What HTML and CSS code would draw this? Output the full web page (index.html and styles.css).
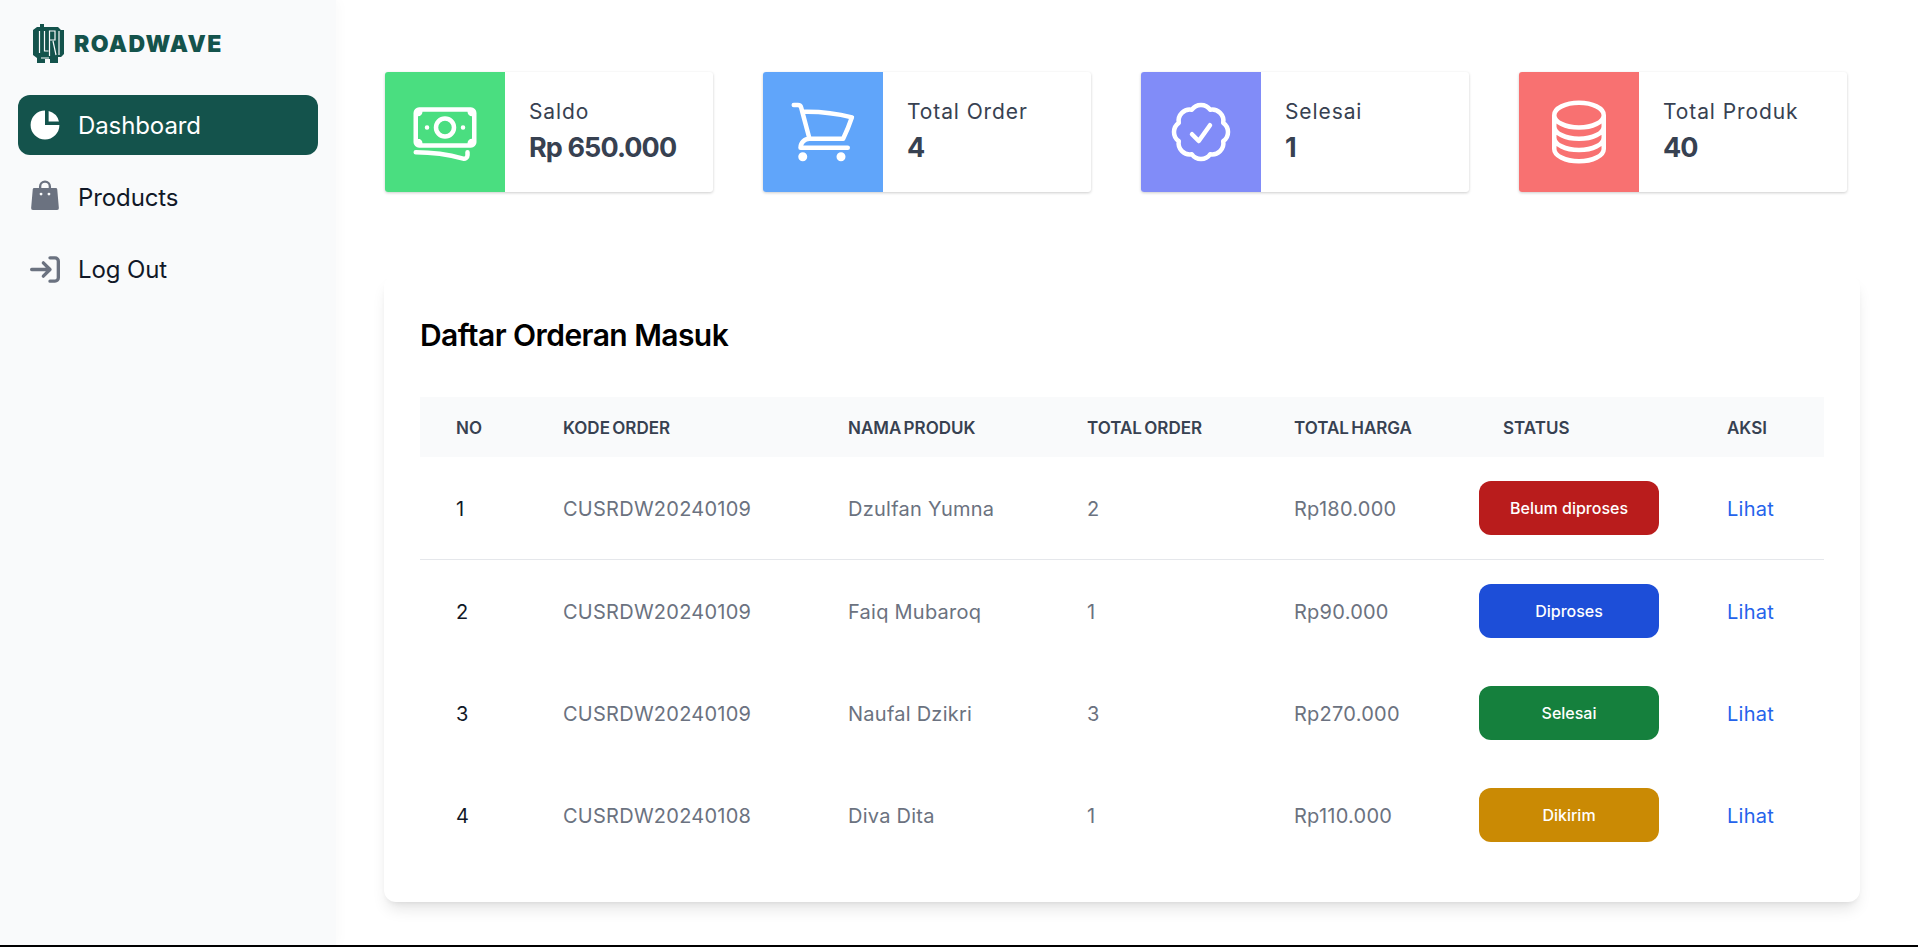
FILE: index.html
```html
<!DOCTYPE html>
<html lang="en">
<head>
    <meta charset="UTF-8">
    <meta name="viewport" content="width=device-width, initial-scale=1.0">
    <title>Roadwave Dashboard</title>
    <link rel="stylesheet" href="styles.css">
</head>
<body>

<div class="app">
    <aside class="sidebar">
        <div class="brand">
            <svg class="brand-logo" viewBox="0 0 32 42">
                <path fill="#14534c" d="M7 1h4v3h14l3 3h3v24l-3 3h-3v6h-8v-4h-5v4H4v-5l-4-3V7l4-3h3z"/>
                <path fill="none" stroke="#f9fafb" stroke-width="1.2" d="M6.5 8v22M11.5 8v20h4M16.5 8h5.5v9h-5.5zM16.5 17v16M20 18l3 14M26 8v24M8 35h8"/>
            </svg>
            <span class="brand-name">ROADWAVE</span>
        </div>
        <nav class="nav">
            <a class="nav-item active" href="#">
                <span class="nav-icon">
                    <svg width="36" height="36" viewBox="0 0 20 20" fill="currentColor"><path d="M2 10a8 8 0 018-8v8h8a8 8 0 11-16 0z"/><path d="M12 2.252A8.014 8.014 0 0117.748 8H12V2.252z"/></svg>
                </span>
                Dashboard
            </a>
            <a class="nav-item" href="#">
                <span class="nav-icon">
                    <svg width="36" height="36" viewBox="0 0 20 20" fill="currentColor"><path fill-rule="evenodd" d="M4 5h12a.8.8 0 01.8.7l.9 10.4a1 1 0 01-1 1.1H3.3a1 1 0 01-1-1.1l.9-10.4A.8.8 0 014 5zM7 8.4a.8.8 0 101.6 0 .8.8 0 10-1.6 0zM11.4 8.4a.8.8 0 101.6 0 .8.8 0 10-1.6 0z"/><path fill="none" stroke="currentColor" stroke-width="1.3" d="M7.3 6V4.2a2.7 2.7 0 015.4 0V6"/></svg>
                </span>
                Products
            </a>
            <a class="nav-item" href="#">
                <span class="nav-icon">
                    <svg width="30" height="27" viewBox="0 0 18 16" fill="none" stroke="currentColor" stroke-width="2" stroke-linecap="round" stroke-linejoin="round"><path d="M1 8h11m0 0L8 4m4 4-4 4m4-11h3a2 2 0 0 1 2 2v10a2 2 0 0 1-2 2h-3"/></svg>
                </span>
                Log Out
            </a>
        </nav>
    </aside>

    <main class="main">
        <section class="stats">
            <div class="stat">
                <div class="stat-icon green">
                    <svg class="hero" viewBox="0 0 24 24"><path d="M2.25 18.75a60.07 60.07 0 0115.797 2.101c.727.198 1.453-.342 1.453-1.096V18.75M3.75 4.5v.75A.75.75 0 013 6h-.75m0 0v-.375c0-.621.504-1.125 1.125-1.125H20.25M2.25 6v9m18-10.5v.75c0 .414.336.75.75.75h.75m-1.5-1.5h.375c.621 0 1.125.504 1.125 1.125v9.75c0 .621-.504 1.125-1.125 1.125h-.375m1.5-1.5H21a.75.75 0 00-.75.75v.75m0 0H3.75m0 0h-.375a1.125 1.125 0 01-1.125-1.125V15m1.5 1.5v-.75A.75.75 0 003 15h-.75M15 10.5a3 3 0 11-6 0 3 3 0 016 0zm3 0h.008v.008H18V10.5zm-12 0h.008v.008H6V10.5z"/></svg>
                </div>
                <div class="stat-body">
                    <div class="stat-label">Saldo</div>
                    <div class="stat-value">Rp 650.000</div>
                </div>
            </div>
            <div class="stat">
                <div class="stat-icon blue">
                    <svg class="hero" viewBox="0 0 24 24"><path d="M2.25 3h1.386c.51 0 .955.343 1.087.835l.383 1.437M7.5 14.25a3 3 0 00-3 3h15.75m-12.75-3h11.218c1.121-2.3 2.1-4.684 2.924-7.138a60.114 60.114 0 00-16.536-1.84M7.5 14.25L5.106 5.272M6 20.25a.75.75 0 11-1.5 0 .75.75 0 011.5 0zm12.75 0a.75.75 0 11-1.5 0 .75.75 0 011.5 0z"/></svg>
                </div>
                <div class="stat-body">
                    <div class="stat-label">Total Order</div>
                    <div class="stat-value">4</div>
                </div>
            </div>
            <div class="stat">
                <div class="stat-icon indigo">
                    <svg class="hero" viewBox="0 0 24 24"><path d="M9 12.75L11.25 15 15 9.75M21 12c0 1.268-.63 2.39-1.593 3.068a3.745 3.745 0 01-1.043 3.296 3.745 3.745 0 01-3.296 1.043A3.745 3.745 0 0112 21c-1.268 0-2.39-.63-3.068-1.593a3.746 3.746 0 01-3.296-1.043 3.745 3.745 0 01-1.043-3.296A3.745 3.745 0 013 12c0-1.268.63-2.39 1.593-3.068a3.745 3.745 0 011.043-3.296 3.746 3.746 0 013.296-1.043A3.746 3.746 0 0112 3c1.268 0 2.39.63 3.068 1.593a3.746 3.746 0 013.296 1.043 3.746 3.746 0 011.043 3.296A3.745 3.745 0 0121 12z"/></svg>
                </div>
                <div class="stat-body">
                    <div class="stat-label">Selesai</div>
                    <div class="stat-value">1</div>
                </div>
            </div>
            <div class="stat">
                <div class="stat-icon red">
                    <svg class="hero" viewBox="0 0 24 24"><path d="M20.25 6.375c0 2.278-3.694 4.125-8.25 4.125S3.75 8.653 3.75 6.375m16.5 0c0-2.278-3.694-4.125-8.25-4.125S3.75 4.097 3.75 6.375m16.5 0v11.25c0 2.278-3.694 4.125-8.25 4.125s-8.25-1.847-8.25-4.125V6.375m16.5 0v3.75m-16.5-3.75v3.75m16.5 0v3.75C20.25 16.153 16.556 18 12 18s-8.25-1.847-8.25-4.125v-3.75m16.5 0c0 2.278-3.694 4.125-8.25 4.125s-8.25-1.847-8.25-4.125"/></svg>
                </div>
                <div class="stat-body">
                    <div class="stat-label">Total Produk</div>
                    <div class="stat-value">40</div>
                </div>
            </div>
        </section>

        <section class="panel">
            <h2 class="panel-title">Daftar Orderan Masuk</h2>
            <table class="orders">
                <colgroup>
                    <col class="col-no">
                    <col class="col-code">
                    <col class="col-name">
                    <col class="col-qty">
                    <col class="col-price">
                    <col class="col-status">
                    <col class="col-action">
                </colgroup>
                <thead>
                    <tr>
                        <th>No</th>
                        <th>Kode Order</th>
                        <th>Nama Produk</th>
                        <th>Total Order</th>
                        <th>Total Harga</th>
                        <th class="status-head">Status</th>
                        <th>Aksi</th>
                    </tr>
                </thead>
                <tbody>
                    <tr class="first-row">
                        <td class="num">1</td>
                        <td>CUSRDW20240109</td>
                        <td>Dzulfan Yumna</td>
                        <td>2</td>
                        <td>Rp180.000</td>
                        <td class="status-cell"><span class="badge b-red">Belum diproses</span></td>
                        <td><a class="link" href="#">Lihat</a></td>
                    </tr>
                    <tr>
                        <td class="num">2</td>
                        <td>CUSRDW20240109</td>
                        <td>Faiq Mubaroq</td>
                        <td>1</td>
                        <td>Rp90.000</td>
                        <td class="status-cell"><span class="badge b-blue">Diproses</span></td>
                        <td><a class="link" href="#">Lihat</a></td>
                    </tr>
                    <tr>
                        <td class="num">3</td>
                        <td>CUSRDW20240109</td>
                        <td>Naufal Dzikri</td>
                        <td>3</td>
                        <td>Rp270.000</td>
                        <td class="status-cell"><span class="badge b-green">Selesai</span></td>
                        <td><a class="link" href="#">Lihat</a></td>
                    </tr>
                    <tr>
                        <td class="num">4</td>
                        <td>CUSRDW20240108</td>
                        <td>Diva Dita</td>
                        <td>1</td>
                        <td>Rp110.000</td>
                        <td class="status-cell"><span class="badge b-yellow">Dikirim</span></td>
                        <td><a class="link" href="#">Lihat</a></td>
                    </tr>
                </tbody>
            </table>
        </section>
    </main>
</div>

</body>
</html>
```

FILE: styles.css
```css
* {
    box-sizing: border-box;
}

body {
    margin: 0;
    font-family: Inter, "Noto Sans", sans-serif;
    background: #fff;
    color: #111827;
}

.app {
    display: flex;
    height: 947px;
    border-bottom: 2px solid #000;
    overflow: hidden;
}

/* sidebar */
.sidebar {
    width: 336px;
    flex-shrink: 0;
    padding: 23px 18px 0;
    background-color: #f9fafb;
    box-shadow: 3px 0 12px rgba(0, 0, 0, 0.025);
}

.brand {
    display: flex;
    align-items: center;
    gap: 9px;
    height: 42px;
    padding-left: 15px;
}

.brand-logo {
    width: 32px;
    height: 42px;
}

.brand-name {
    font-size: 23px;
    font-weight: 900;
    letter-spacing: 1.4px;
    color: #14534c;
}

.nav {
    display: flex;
    flex-direction: column;
    gap: 12px;
    margin-top: 30px;
}

.nav-item {
    display: flex;
    align-items: center;
    gap: 15px;
    height: 60px;
    padding-left: 9px;
    border-radius: 12px;
    font-size: 24px;
    letter-spacing: -0.1px;
    color: #111827;
    text-decoration: none;
}

.nav-item.active {
    background-color: #14534c;
    color: #fff;
}

.nav-icon {
    display: flex;
    align-items: center;
    justify-content: center;
    width: 36px;
    height: 36px;
    color: #6b7280;
}

.active .nav-icon {
    color: #fff;
}

/* main */
.main {
    flex: 1;
    padding: 72px 58px 0 48px;
}

.stats {
    display: grid;
    grid-template-columns: repeat(4, 328px);
    gap: 50px;
    margin-left: 1px;
}

.stat {
    display: flex;
    height: 120px;
    background: #fff;
    border-radius: 3px;
    overflow: hidden;
    box-shadow: 0 1px 3px rgba(0, 0, 0, 0.2);
}

.stat-icon {
    display: flex;
    align-items: center;
    justify-content: center;
    width: 120px;
}

.green { background-color: #4ade80; }
.blue { background-color: #60a5fa; }
.indigo { background-color: #818cf8; }
.red { background-color: #f87171; }

.hero {
    width: 72px;
    height: 72px;
    fill: none;
    stroke: #fff;
    stroke-width: 1.5;
    stroke-linecap: round;
    stroke-linejoin: round;
}

.stat-body {
    padding: 25px 0 0 24px;
    color: #374151;
}

.stat-label {
    font-size: 21px;
    line-height: 30px;
    letter-spacing: 0.9px;
}

.stat-value {
    margin-top: 3px;
    font-size: 27px;
    line-height: 36px;
    font-weight: 700;
    letter-spacing: -0.9px;
}

.panel {
    height: 627px;
    margin-top: 83px;
    padding: 42px 36px 36px;
    background: #fff;
    border-radius: 12px;
    box-shadow: 0 10px 15px -3px rgba(0, 0, 0, 0.1), 0 4px 6px -4px rgba(0, 0, 0, 0.1);
}

.panel-title {
    margin: 0 0 44px;
    font-size: 30px;
    line-height: 36px;
    font-weight: 600;
    letter-spacing: -0.55px;
    color: #000;
}

/* table */
.orders {
    width: 1404px;
    table-layout: fixed;
    border-collapse: separate;
    border-spacing: 0;
}

.col-no { width: 119px; }
.col-code { width: 285px; }
.col-name { width: 239px; }
.col-qty { width: 207px; }
.col-price { width: 209px; }
.col-status { width: 224px; }
.col-action { width: 121px; }

.orders th {
    height: 60px;
    padding: 1px 0 0 24px;
    background-color: #f9fafb;
    font-size: 17px;
    font-weight: 600;
    word-spacing: -2px;
    text-align: left;
    text-transform: uppercase;
    color: #374151;
}

.orders th:first-child,
.orders td:first-child {
    padding-left: 36px;
}

.orders td {
    height: 102px;
    padding: 2px 0 0 24px;
    font-size: 20px;
    letter-spacing: 0.25px;
    color: #6b7280;
}

.orders .first-row td {
    height: 103px;
    border-bottom: 1px solid #e5e7eb;
}

.orders td.num {
    color: #111827;
}

.orders td.status-cell {
    padding: 0;
}

.badge {
    display: flex;
    align-items: center;
    justify-content: center;
    width: 180px;
    height: 54px;
    border-radius: 12px;
    font-size: 16px;
    font-weight: 500;
    letter-spacing: 0;
    color: #fff;
}

.b-red { background-color: #b91c1c; }
.b-blue { background-color: #1d4ed8; }
.b-green { background-color: #15803d; }
.b-yellow { background-color: #ca8a04; }

.link {
    color: #2563eb;
    text-decoration: none;
}
```
